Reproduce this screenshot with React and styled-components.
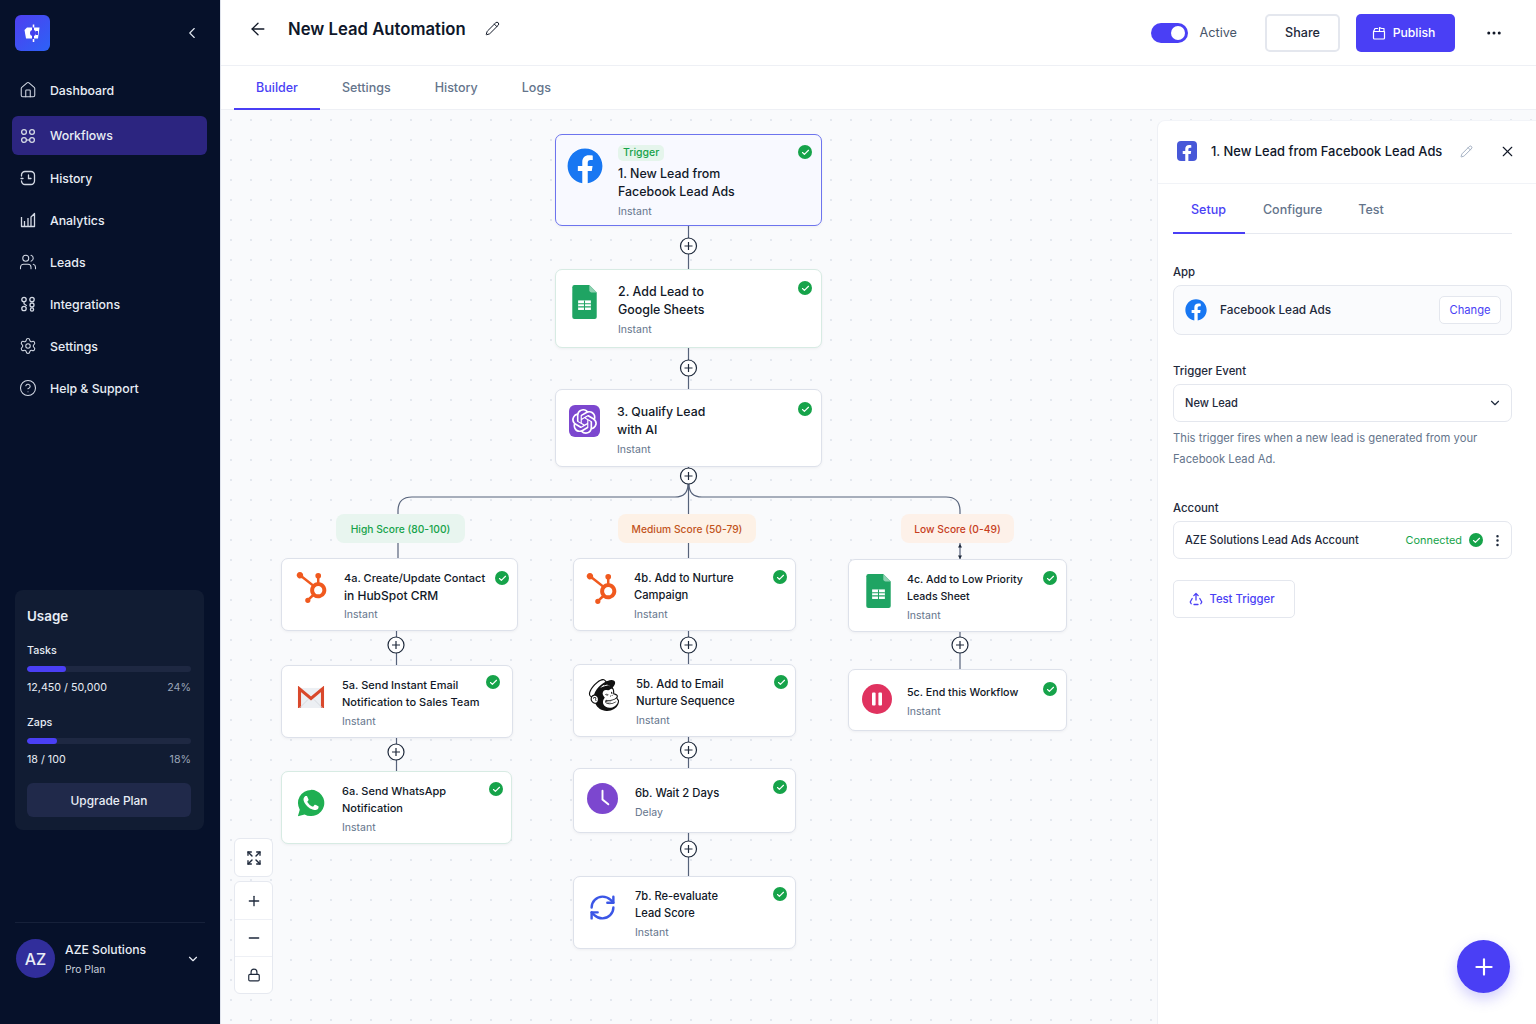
import styled, { createGlobalStyle } from "styled-components";
import {
  ArrowLeft,
  Check,
  ChevronDown,
  ChevronLeft,
  CircleHelp,
  Ellipsis,
  EllipsisVertical,
  Expand,
  House,
  Lock,
  Minus,
  Pencil,
  Plus,
  RefreshCw,
  Settings,
  Users,
  X,
} from "lucide-react";
import { FaFacebook, FaFacebookF } from "react-icons/fa";
import { SiHubspot, SiMailchimp, SiOpenai } from "react-icons/si";

const GlobalStyle = createGlobalStyle`
  * { box-sizing: border-box; }
  html, body { margin: 0; height: 100%; }
  body {
    font-family: Inter, "Liberation Sans", sans-serif;
    color: #111827;
    background: #fff;
    overflow: hidden;
  }
`;

const BLUE = "#4a3ff5";

const Shell = styled.div`
  display: flex;
  width: 1536px;
  height: 1024px;
  position: relative;
  overflow: hidden;
`;

/* sidebar */
const Sidebar = styled.aside`
  flex: 0 0 221px;
  display: flex;
  flex-direction: column;
  padding: 15px 0 0;
  background: #06112a;
  border-right: 1px solid #dfe3ec;
`;
const Brand = styled.div`
  display: flex;
  align-items: center;
  justify-content: space-between;
  height: 36px;
  padding: 0 19px 0 15px;
  color: #e2e8f0;
`;
const Logo = styled.div`
  width: 35px;
  height: 36px;
  border-radius: 6px;
  background: linear-gradient(135deg, #4f3ff0 0%, #2c62f6 100%);
  display: flex;
  align-items: center;
  justify-content: center;
`;
const Nav = styled.nav`
  display: flex;
  flex-direction: column;
  padding: 18px 13px 0 12px;
`;
const NavItem = styled.div`
  display: flex;
  align-items: center;
  gap: 14px;
  height: ${(p) => (p.$active ? 39 : 42)}px;
  margin: ${(p) => (p.$active ? "5px 0 2px" : "0")};
  padding-left: 8px;
  border-radius: 6px;
  font-size: 12.3px;
  font-weight: 500;
  color: #e8edf5;
  background: ${(p) => (p.$active ? "#2c2580" : "transparent")};
`;
const NavGlyph = styled.span`
  flex: 0 0 16px;
  width: 16px;
  min-width: 0;
  display: flex;
  align-items: center;
  justify-content: center;
  color: #d3d9e4;
  svg { flex: none; }
`;
const UsageCard = styled.section`
  margin: 181px 16px 0 15px;
  height: 240px;
  padding: 17px 13px 0 12px;
  background: #111c33;
  border-radius: 8px;
  color: #e8edf5;
`;
const UsageTitle = styled.div`
  font-size: 13.4px;
  font-weight: 600;
  line-height: 18px;
  margin-bottom: 19px;
`;
const Meter = styled.div`
  margin-bottom: 21px;
`;
const MeterLabel = styled.div`
  font-size: 10.7px;
  font-weight: 500;
  line-height: 14px;
`;
const MeterTrack = styled.div`
  height: 6px;
  margin: 8px 0 9px;
  border-radius: 3px;
  background: #1e2842;
  overflow: hidden;
`;
const MeterFill = styled.div`
  height: 100%;
  border-radius: 3px;
  background: ${BLUE};
`;
const MeterRow = styled.div`
  display: flex;
  justify-content: space-between;
  font-size: 10.7px;
  line-height: 14px;
  span:last-child { color: #9aa5b8; }
`;
const UpgradeButton = styled.div`
  height: 34px;
  margin-top: -5px;
  border-radius: 6px;
  background: #20294a;
  display: flex;
  align-items: center;
  justify-content: center;
  font-size: 11.9px;
  font-weight: 500;
`;
const Account = styled.div`
  margin: 92px 15px 0;
  padding: 16px 5px 0 1px;
  border-top: 1px solid #16213a;
  display: flex;
  align-items: center;
  color: #e8edf5;
`;
const Avatar = styled.div`
  width: 39px;
  height: 39px;
  border-radius: 50%;
  background: #312e9b;
  display: flex;
  align-items: center;
  justify-content: center;
  font-size: 16px;
  font-weight: 500;
  margin-right: 10px;
`;
const AccountText = styled.div`
  flex: 1;
  b { display: block; font-size: 12.2px; font-weight: 500; line-height: 17px; margin-bottom: 4px; }
  span { display: block; font-size: 10.3px; line-height: 14px; color: #cbd2de; }
`;

/* main column */
const Main = styled.main`
  flex: 1;
  display: flex;
  flex-direction: column;
  min-width: 0;
`;
const Header = styled.header`
  flex: 0 0 66px;
  display: flex;
  align-items: center;
  padding: 0 33px 8px 27px;
  border-bottom: 1px solid #eef0f5;
`;
const Title = styled.h1`
  margin: 0 19px 0 20px;
  font-size: 16.7px;
  font-weight: 600;
  color: #0f172a;
`;
const HeaderRight = styled.div`
  margin: 8px 0 0 auto;
  display: flex;
  align-items: center;
`;
const Toggle = styled.div`
  width: 37px;
  height: 20px;
  border-radius: 10px;
  background: ${BLUE};
  padding: 3px 3px 3px 20px;
  margin-right: 11px;
  &::after {
    content: "";
    display: block;
    width: 14px;
    height: 14px;
    border-radius: 50%;
    background: #fff;
  }
`;
const ToggleLabel = styled.span`
  font-size: 12.7px;
  color: #475569;
  margin-right: 28px;
`;
const ShareButton = styled.div`
  width: 75px;
  height: 38px;
  border: 2px solid #e4e7ee;
  border-radius: 5px;
  display: flex;
  align-items: center;
  justify-content: center;
  font-size: 12.6px;
  font-weight: 500;
  color: #1e293b;
  margin-right: 16px;
`;
const PublishButton = styled.div`
  width: 99px;
  height: 38px;
  padding-right: 4px;
  border-radius: 5px;
  background: ${BLUE};
  color: #fff;
  display: flex;
  align-items: center;
  justify-content: center;
  gap: 7px;
  font-size: 12.2px;
  font-weight: 500;
  margin-right: 30px;
`;
const TabBar = styled.div`
  flex: 0 0 44px;
  min-height: 0;
  display: flex;
  padding-left: 13px;
  border-bottom: 1px solid #eef0f5;
`;
const Tab = styled.div`
  padding: 0 22px;
  display: flex;
  align-items: center;
  height: 44px;
  font-size: 12.5px;
  font-weight: 500;
  color: ${(p) => (p.$active ? BLUE : "#64748b")};
  border-bottom: 2px solid ${(p) => (p.$active ? BLUE : "transparent")};
`;
const Workspace = styled.div`
  flex: 1;
  display: flex;
  background-color: #f9fafc;
  background-image: radial-gradient(#e4e8ef 0.8px, transparent 1px);
  background-size: 20px 20px;
  min-height: 0;
`;

/* canvas */
const Canvas = styled.div`
  position: relative;
  flex: 0 0 936px;
`;
const Wires = styled.svg`
  position: absolute;
  inset: 0;
  width: 936px;
  height: 914px;
`;
const NodeCard = styled.div.attrs((p) => ({
  style: { left: p.$x - 221, top: p.$y - 110, width: p.$w, height: p.$h },
}))`
  position: absolute;
  display: flex;
  align-items: center;
  background: ${(p) => (p.$selected ? "#f8f9ff" : "#fff")};
  border: 1px solid ${(p) => (p.$selected ? "#6d74ee" : p.$tint ? "#d7ebe3" : "#dde1ea")};
  border-radius: 7px;
  box-shadow: 0 1px 3px rgba(15, 23, 42, 0.05);
`;
const NodeIcon = styled.div`
  flex: 0 0 ${(p) => p.$slot}px;
  align-self: flex-start;
  padding: ${(p) => p.$top}px 0 0 ${(p) => p.$left}px;
  display: flex;
`;
const NodeBody = styled.div`
  display: flex;
  flex-direction: column;
  align-items: flex-start;
  padding-top: 2px;
`;
const Tag = styled.span`
  height: 16px;
  padding: 0 5px;
  margin-bottom: 4px;
  border-radius: 5px;
  background: #e5f5ec;
  color: #16a34a;
  font-size: 10.5px;
  font-weight: 500;
  line-height: 16px;
`;
const NodeLine = styled.div`
  font-size: ${(p) => p.$size}px;
  font-weight: 500;
  line-height: ${(p) => p.$lh}px;
  color: #111827;
  white-space: nowrap;
`;
const NodeSub = styled.div`
  margin-top: 4px;
  font-size: 10.5px;
  line-height: 13px;
  color: #64748b;
`;
const StatusDot = styled.span`
  display: inline-flex;
  align-items: center;
  justify-content: center;
  width: 14px;
  height: 14px;
  border-radius: 50%;
  background: #16a34a;
  color: #fff;
`;
const NodeStatus = styled.div`
  position: absolute;
  right: ${(p) => p.$right}px;
  top: ${(p) => p.$top}px;
  display: flex;
`;
const BranchLabel = styled.div.attrs((p) => ({
  style: { left: p.$x - 221, top: 514 - 110, width: p.$w },
}))`
  position: absolute;
  height: 29px;
  border-radius: 8px;
  display: flex;
  align-items: center;
  justify-content: center;
  font-size: 10.25px;
  font-weight: 500;
  background: ${(p) => p.$bg};
  color: ${(p) => p.$color};
`;
const ZoomStack = styled.div`
  position: absolute;
  left: 13px;
  top: 728px;
  display: flex;
  flex-direction: column;
  gap: 4px;
`;
const ZoomGroup = styled.div`
  width: 39px;
  background: #fff;
  border: 1px solid #e6e9f0;
  border-radius: 6px;
  display: flex;
  flex-direction: column;
`;
const ZoomButton = styled.div`
  height: 37px;
  display: flex;
  align-items: center;
  justify-content: center;
  color: #1e293b;
  & + & { border-top: 1px solid #eef0f5; }
`;

/* right panel */
const Panel = styled.aside`
  flex: 1;
  margin-top: 10px;
  background: #fff;
  border-left: 1px solid #eef0f5;
  border-top: 1px solid #f2f4f8;
  border-top-left-radius: 8px;
`;
const PanelHeader = styled.div`
  height: 63px;
  display: flex;
  align-items: center;
  padding: 0 20px 2px 19px;
  border-bottom: 1px solid #f1f3f7;
`;
const PanelTitle = styled.div`
  margin-left: 14px;
  font-size: 12.9px;
  font-weight: 500;
  color: #0f172a;
  white-space: nowrap;
  flex: 1;
`;
const CloseIcon = styled(X)`
  margin-left: 26px;
`;
const SquareLogo = styled.div`
  width: 20px;
  height: 20px;
  border-radius: 4px;
  background: #4758d8;
  color: #fff;
  display: flex;
  align-items: flex-end;
  justify-content: center;
`;
const PanelBody = styled.div`
  padding: 0 24px 0 15px;
`;
const PanelTabs = styled.div`
  display: flex;
  height: 50px;
  border-bottom: 1px solid #e6e9f0;
  margin-bottom: 30px;
`;
const PanelTab = styled.div`
  padding: 2px ${(p) => (p.$active ? "19px 0 18px" : "18px 0")};
  height: 50px;
  display: flex;
  align-items: center;
  font-size: 12.5px;
  font-weight: 500;
  color: ${(p) => (p.$active ? BLUE : "#64748b")};
  border-bottom: 2px solid ${(p) => (p.$active ? BLUE : "transparent")};
`;
const FieldLabel = styled.div`
  font-size: 11.4px;
  font-weight: 500;
  line-height: 15px;
  color: #1e293b;
  padding-top: 1px;
  margin-bottom: 5px;
`;
const AppBox = styled.div`
  height: 50px;
  display: flex;
  align-items: center;
  padding: 0 10px 0 11px;
  border: 1px solid #e4e7ee;
  border-radius: 8px;
  background: #fafbfd;
  margin-bottom: 28px;
`;
const AppName = styled.div`
  flex: 1;
  margin-left: 13px;
  font-size: 11.8px;
  font-weight: 500;
  color: #1e293b;
`;
const ChangeButton = styled.div`
  width: 62px;
  height: 28px;
  border: 1px solid #e4e7ee;
  border-radius: 5px;
  background: #fff;
  display: flex;
  align-items: center;
  justify-content: center;
  color: ${BLUE};
  font-size: 11.2px;
`;
const FieldBox = styled.div`
  height: 38px;
  display: flex;
  align-items: center;
  justify-content: space-between;
  padding: 0 9px 0 11px;
  border: 1px solid #e4e7ee;
  border-radius: 7px;
  font-size: 11.1px;
  font-weight: 500;
  color: #1e293b;
`;
const Hint = styled.p`
  margin: 6px 0 30px;
  font-size: 11.24px;
  line-height: 21px;
  color: #64748b;
`;
const Connected = styled.div`
  display: flex;
  align-items: center;
  font-size: 10.9px;
  color: #16a34a;
  font-weight: 400;
  gap: 7px;
`;
const Kebab = styled(EllipsisVertical)`
  margin-right: -3px;
  color: #1e293b;
`;
const TestButton = styled.div`
  width: 122px;
  height: 38px;
  margin-top: 21px;
  padding-right: 4px;
  border: 1px solid #e4e7ee;
  border-radius: 5px;
  display: flex;
  align-items: center;
  justify-content: center;
  gap: 6px;
  color: ${BLUE};
  font-size: 11.3px;
  font-weight: 500;
`;
const Fab = styled.div`
  position: absolute;
  left: 1457px;
  top: 940px;
  width: 53px;
  height: 53px;
  border-radius: 50%;
  background: ${BLUE};
  color: #fff;
  display: flex;
  align-items: center;
  justify-content: center;
  box-shadow: 0 6px 14px rgba(74, 63, 245, 0.25);
`;

/* drawn icons */
const LogoMark = () => (
  <svg width="22" height="22" viewBox="0 0 22 22" fill="none">
    <path d="M5 5.5h12.5l-1.5 11H4L2.5 8z" fill="#fff" />
    <path d="M11 2v18" stroke="#4340ee" strokeWidth="2" />
    <path d="M11.5 2.5v3M11.5 17v3" stroke="#fff" strokeWidth="1.6" />
    <circle cx="11" cy="11" r="3" fill="#4340ee" />
    <path d="M14 9h2v4h-2z" fill="#4340ee" />
  </svg>
);
const WorkflowIcon = () => (
  <svg width="16" height="16" viewBox="0 0 16 16" fill="none" stroke="currentColor" strokeWidth="1.3">
    <circle cx="4" cy="4" r="2.4" />
    <circle cx="12" cy="4" r="2.4" />
    <circle cx="4" cy="12" r="2.4" />
    <circle cx="12" cy="12" r="2.4" />
    <path d="M6.4 12h3.2" />
  </svg>
);
const HistoryIcon = () => (
  <svg width="16" height="16" viewBox="0 0 16 16" fill="none" stroke="currentColor" strokeWidth="1.3" strokeLinecap="round">
    <path d="M1.5 6V5a3.5 3.5 0 0 1 3.5-3.5h6A3.5 3.5 0 0 1 14.5 5v6a3.5 3.5 0 0 1-3.5 3.5H5A3.5 3.5 0 0 1 1.5 11" />
    <path d="M8.5 5v3.5H11M1 8.5h2" />
  </svg>
);
const AnalyticsIcon = () => (
  <svg width="16" height="16" viewBox="0 0 16 16" fill="none" stroke="currentColor" strokeWidth="1.3" strokeLinejoin="round">
    <path d="M1.5 5v9.5h13V1.5L11 5v6M11 5v9.5M4.5 14.5V9M8 14.5V6" />
  </svg>
);
const IntegrationsIcon = () => (
  <svg width="16" height="16" viewBox="0 0 16 16" fill="none" stroke="currentColor" strokeWidth="1.3">
    <circle cx="4" cy="3.5" r="2.2" />
    <circle cx="12" cy="3.5" r="2.2" />
    <circle cx="12" cy="9" r="2" />
    <circle cx="4" cy="12.5" r="2.2" />
    <circle cx="12" cy="13.5" r="1.6" />
    <path d="M4 6v1.5c0 1 2.5 1 2.5 2.5" />
  </svg>
);
const PublishIcon = () => (
  <svg width="14" height="14" viewBox="0 0 14 14" fill="none" stroke="currentColor" strokeWidth="1.2" strokeLinejoin="round">
    <path d="M1.5 5.5V12a1 1 0 0 0 1 1h9a1 1 0 0 0 1-1V5.5zM1.5 5.5 3 2.5h3M7.5 5.5V1.5l2 1h2.5v3" />
  </svg>
);
const TestIcon = () => (
  <svg width="14" height="14" viewBox="0 0 14 14" fill="none" stroke="currentColor" strokeWidth="1.3" strokeLinecap="round" strokeLinejoin="round">
    <path d="M7 8V1.5M4.8 3.6 7 1.5l2.2 2.1M3.2 6.5 1.2 10l1 1.8M5 12.5h4M10.8 6.5l2 3.5-1 1.8" />
  </svg>
);
const SheetsIcon = () => (
  <svg width="25" height="34" viewBox="0 0 23 32">
    <path d="M2 0h14l7 7v23a2 2 0 0 1-2 2H2a2 2 0 0 1-2-2V2a2 2 0 0 1 2-2z" fill="#1fa463" />
    <path d="M16 0l7 7h-5a2 2 0 0 1-2-2z" fill="#8ed1b1" />
    <path d="M5.5 14.5h12v9h-12z" fill="#fff" />
    <path d="M5.5 17.6h12M5.5 20.6h12M11.5 14.5v9" stroke="#1fa463" strokeWidth="1" />
  </svg>
);
const GmailIcon = () => (
  <svg width="30" height="23" viewBox="0 0 30 24">
    <path d="M2 2h26v21H2z" fill="#eceff3" />
    <path d="M3 23V3l12 10L27 3v20" fill="none" stroke="#d9482b" strokeWidth="3.2" strokeLinejoin="miter" />
    <path d="M3 23l9-9M27 23l-9-9" stroke="#d5d9df" strokeWidth="1" />
  </svg>
);
const WhatsAppIcon = () => (
  <svg width="30" height="30" viewBox="0 0 24 24">
    <path d="M12 1.5A10.5 10.5 0 0 0 3 17.3L1.5 22.5l5.4-1.4A10.5 10.5 0 1 0 12 1.5z" fill="#1faf52" />
    <path
      d="M17.47 14.38c-.3-.15-1.76-.87-2.03-.97-.27-.1-.47-.15-.67.15-.2.3-.77.97-.94 1.16-.17.2-.35.22-.65.07-.3-.15-1.26-.46-2.39-1.47-.88-.79-1.48-1.76-1.65-2.06-.17-.3-.02-.46.13-.6.13-.14.3-.35.45-.52.15-.17.2-.3.3-.5.1-.2.05-.37-.03-.52-.07-.15-.67-1.61-.92-2.21-.24-.58-.49-.5-.67-.51l-.57-.01c-.2 0-.52.07-.79.37-.27.3-1.04 1.02-1.04 2.48s1.07 2.88 1.21 3.07c.15.2 2.1 3.2 5.08 4.49.71.3 1.26.49 1.69.62.71.23 1.36.2 1.87.12.57-.08 1.76-.72 2.01-1.41.25-.69.25-1.29.17-1.41-.07-.13-.27-.2-.57-.35z"
      fill="#fff"
    />
  </svg>
);
const ClockBadge = () => (
  <svg width="31" height="31" viewBox="0 0 32 32">
    <circle cx="16" cy="16" r="16" fill="#7c47cf" />
    <path d="M16 8v9l6 5" fill="none" stroke="#fff" strokeWidth="2" strokeLinecap="round" />
  </svg>
);
const PauseBadge = () => (
  <svg width="30" height="30" viewBox="0 0 30 30">
    <circle cx="15" cy="15" r="15" fill="#e0325f" />
    <rect x="10" y="8.5" width="3.6" height="13" rx="1" fill="#fff" />
    <rect x="16.4" y="8.5" width="3.6" height="13" rx="1" fill="#fff" />
  </svg>
);
const SquareBadge = styled.div`
  width: 31px;
  height: 32px;
  border-radius: 6px;
  background: #7c47cf;
  color: #fff;
  display: flex;
  align-items: center;
  justify-content: center;
`;
const OpenAiBadge = () => (
  <SquareBadge>
    <SiOpenai size={25} />
  </SquareBadge>
);
const FacebookRound = styled.span`
  display: inline-flex;
  color: #1877f2;
  border-radius: 50%;
  background: #fff;
`;
const FacebookMark = ({ size }) => (
  <FacebookRound>
    <FaFacebook size={size} />
  </FacebookRound>
);

const Good = () => (
  <StatusDot>
    <Check size={9} strokeWidth={3} />
  </StatusDot>
);

const navItems = [
  ["Dashboard", <House size={18} strokeWidth={1.4} />],
  ["Workflows", <WorkflowIcon />, true],
  ["History", <HistoryIcon />],
  ["Analytics", <AnalyticsIcon />],
  ["Leads", <Users size={18} strokeWidth={1.4} />],
  ["Integrations", <IntegrationsIcon />],
  ["Settings", <Settings size={18} strokeWidth={1.4} />],
  ["Help & Support", <CircleHelp size={18} strokeWidth={1.4} />],
];

const Hub = () => <SiHubspot size={31} color="#f0591e" />;

const nodes = [
  { x: 555, y: 134, w: 267, h: 92, left: 11, iconTop: 13, slot: 62, icon: <FacebookMark size={36} />, tag: "Trigger", title: ["1. New Lead from", "Facebook Lead Ads"], sub: "Instant", size: 12.4, lh: 18, right: 9, top: 10, selected: true },
  { x: 555, y: 269, w: 267, h: 79, left: 16, iconTop: 15, slot: 62, icon: <SheetsIcon />, title: ["2. Add Lead to", "Google Sheets"], sub: "Instant", size: 12.4, lh: 18, right: 9, top: 11, tint: true },
  { x: 555, y: 389, w: 267, h: 78, left: 13, iconTop: 15, slot: 61, icon: <OpenAiBadge />, title: ["3. Qualify Lead", "with AI"], sub: "Instant", size: 12.3, lh: 18, right: 9, top: 12 },
  { x: 281, y: 558, w: 237, h: 73, left: 14, iconTop: 13, slot: 62, icon: <Hub />, title: ["4a. Create/Update Contact", "in HubSpot CRM"], sub: "Instant", size: 11, lineSizes: [11, 12], lh: 17, right: 8, top: 12 },
  { x: 281, y: 665, w: 232, h: 73, left: 14, iconTop: 20, slot: 60, icon: <GmailIcon />, title: ["5a. Send Instant Email", "Notification to Sales Team"], sub: "Instant", size: 11, lh: 17, right: 12, top: 9 },
  { x: 281, y: 771, w: 231, h: 73, left: 14, iconTop: 16, slot: 60, icon: <WhatsAppIcon />, title: ["6a. Send WhatsApp", "Notification"], sub: "Instant", size: 11, lh: 17, right: 8, top: 10, tint: true },
  { x: 573, y: 558, w: 223, h: 73, left: 12, iconTop: 14, slot: 60, icon: <Hub />, title: ["4b. Add to Nurture", "Campaign"], sub: "Instant", size: 11.2, lh: 17, right: 8, top: 11 },
  { x: 573, y: 664, w: 223, h: 73, left: 14, iconTop: 14, slot: 62, icon: <SiMailchimp size={32} color="#111" />, title: ["5b. Add to Email", "Nurture Sequence"], sub: "Instant", size: 11.3, lh: 17, right: 7, top: 10 },
  { x: 573, y: 768, w: 223, h: 65, left: 13, iconTop: 14, slot: 61, icon: <ClockBadge />, title: ["6b. Wait 2 Days"], sub: "Delay", size: 11.3, lh: 17, right: 8, top: 11 },
  { x: 573, y: 876, w: 223, h: 73, left: 14, iconTop: 16, slot: 61, icon: <RefreshCw size={29} color="#3b56e6" strokeWidth={2} />, title: ["7b. Re-evaluate", "Lead Score"], sub: "Instant", size: 11.1, lh: 17, right: 8, top: 10 },
  { x: 848, y: 559, w: 219, h: 73, left: 17, iconTop: 14, slot: 58, icon: <SheetsIcon />, title: ["4c. Add to Low Priority", "Leads Sheet"], sub: "Instant", size: 10.6, lh: 17, right: 9, top: 11 },
  { x: 848, y: 669, w: 219, h: 62, left: 13, iconTop: 14, slot: 58, icon: <PauseBadge />, title: ["5c. End this Workflow"], sub: "Instant", size: 10.7, lh: 17, right: 9, top: 12 },
];

const plusSpots = [
  [688.5, 246], [688.5, 368], [688.5, 476],
  [396, 645], [396, 752],
  [688.5, 645], [688.5, 750], [688.5, 849],
  [960, 645],
];

const wirePaths = [
  "M688.5 225V269", "M688.5 348V389", "M688.5 467V514",
  "M688 484Q688 497 675 497H412Q398 497 398 511V514",
  "M689 484Q689 497 702 497H946Q960 497 960 511V514",
  "M398 543V558", "M688.5 543V558", "M960 543V559",
  "M396.5 631V665", "M396.5 738V771",
  "M688.5 631V664", "M688.5 737V768", "M688.5 833V876",
  "M960 632V669",
];

const Flow = () => (
  <Wires viewBox="221 110 936 914" fill="none">
    {wirePaths.map((d) => (
      <path key={d} d={d} stroke="#56627a" strokeWidth="1.2" />
    ))}
    <path d="M958 555.5l2 3.5 2-3.5zM958 547.5l2-3.5 2 3.5z" fill="#1e293b" />
    {plusSpots.map(([cx, cy]) => (
      <g key={`${cx}-${cy}`} stroke="#1e293b" strokeWidth="1.2">
        <circle cx={cx} cy={cy} r="8" fill="#fff" />
        <path d={`M${cx - 4} ${cy}h8M${cx} ${cy - 4}v8`} />
      </g>
    ))}
  </Wires>
);

const App = () => (
  <Shell>
    <GlobalStyle />
    <Sidebar>
      <Brand>
        <Logo>
          <LogoMark />
        </Logo>
        <ChevronLeft size={18} strokeWidth={1.5} />
      </Brand>
      <Nav>
        {navItems.map(([label, icon, active]) => (
          <NavItem key={label} $active={active}>
            <NavGlyph>{icon}</NavGlyph>
            {label}
          </NavItem>
        ))}
      </Nav>
      <UsageCard>
        <UsageTitle>Usage</UsageTitle>
        <Meter>
          <MeterLabel>Tasks</MeterLabel>
          <MeterTrack>
            <MeterFill style={{ width: "24%" }} />
          </MeterTrack>
          <MeterRow>
            <span>12,450 / 50,000</span>
            <span>24%</span>
          </MeterRow>
        </Meter>
        <Meter>
          <MeterLabel>Zaps</MeterLabel>
          <MeterTrack>
            <MeterFill style={{ width: "18%" }} />
          </MeterTrack>
          <MeterRow>
            <span>18 / 100</span>
            <span>18%</span>
          </MeterRow>
        </Meter>
        <UpgradeButton>Upgrade Plan</UpgradeButton>
      </UsageCard>
      <Account>
        <Avatar>AZ</Avatar>
        <AccountText>
          <b>AZE Solutions</b>
          <span>Pro Plan</span>
        </AccountText>
        <ChevronDown size={14} />
      </Account>
    </Sidebar>

    <Main>
      <Header>
        <ArrowLeft size={20} strokeWidth={1.6} />
        <Title>New Lead Automation</Title>
        <Pencil size={15} strokeWidth={1.6} />
        <HeaderRight>
          <Toggle />
          <ToggleLabel>Active</ToggleLabel>
          <ShareButton>Share</ShareButton>
          <PublishButton>
            <PublishIcon />
            Publish
          </PublishButton>
          <Ellipsis size={18} />
        </HeaderRight>
      </Header>
      <TabBar>
        <Tab $active>Builder</Tab>
        <Tab>Settings</Tab>
        <Tab>History</Tab>
        <Tab>Logs</Tab>
      </TabBar>
      <Workspace>
        <Canvas>
          <Flow />
          <BranchLabel $x={336} $w={129} $bg="#e8f5ef" $color="#16a34a">
            High Score (80-100)
          </BranchLabel>
          <BranchLabel $x={618} $w={138} $bg="#fdf1e6" $color="#c2541c">
            Medium Score (50-79)
          </BranchLabel>
          <BranchLabel $x={901} $w={113} $bg="#fdf1e9" $color="#c73e1d">
            Low Score (0-49)
          </BranchLabel>
          {nodes.map((n) => (
            <NodeCard key={n.title[0]} $x={n.x} $y={n.y} $w={n.w} $h={n.h} $selected={n.selected} $tint={n.tint}>
              <NodeIcon $slot={n.slot} $left={n.left} $top={n.iconTop}>
                {n.icon}
              </NodeIcon>
              <NodeBody>
                {n.tag && <Tag>{n.tag}</Tag>}
                {n.title.map((line, i) => (
                  <NodeLine key={line} $size={n.lineSizes ? n.lineSizes[i] : n.size} $lh={n.lh}>
                    {line}
                  </NodeLine>
                ))}
                <NodeSub>{n.sub}</NodeSub>
              </NodeBody>
              <NodeStatus $right={n.right} $top={n.top}>
                <Good />
              </NodeStatus>
            </NodeCard>
          ))}
          <ZoomStack>
            <ZoomGroup>
              <ZoomButton>
                <Expand size={16} />
              </ZoomButton>
            </ZoomGroup>
            <ZoomGroup>
              <ZoomButton>
                <Plus size={16} />
              </ZoomButton>
              <ZoomButton>
                <Minus size={16} />
              </ZoomButton>
              <ZoomButton>
                <Lock size={14} />
              </ZoomButton>
            </ZoomGroup>
          </ZoomStack>
        </Canvas>
        <Panel>
          <PanelHeader>
            <SquareLogo>
              <FaFacebookF size={16} />
            </SquareLogo>
            <PanelTitle>1. New Lead from Facebook Lead Ads</PanelTitle>
            <Pencil size={13} color="#94a3b8" strokeWidth={1.6} />
            <CloseIcon size={17} strokeWidth={1.6} />
          </PanelHeader>
          <PanelBody>
            <PanelTabs>
              <PanelTab $active>Setup</PanelTab>
              <PanelTab>Configure</PanelTab>
              <PanelTab>Test</PanelTab>
            </PanelTabs>
            <FieldLabel>App</FieldLabel>
            <AppBox>
              <FacebookMark size={22} />
              <AppName>Facebook Lead Ads</AppName>
              <ChangeButton>Change</ChangeButton>
            </AppBox>
            <FieldLabel>Trigger Event</FieldLabel>
            <FieldBox>
              New Lead
              <ChevronDown size={14} />
            </FieldBox>
            <Hint>
              This trigger fires when a new lead is generated from your
              <br />
              Facebook Lead Ad.
            </Hint>
            <FieldLabel>Account</FieldLabel>
            <FieldBox>
              AZE Solutions Lead Ads Account
              <Connected>
                Connected
                <Good />
                <Kebab size={15} />
              </Connected>
            </FieldBox>
            <TestButton>
              <TestIcon />
              Test Trigger
            </TestButton>
          </PanelBody>
        </Panel>
      </Workspace>
    </Main>
    <Fab>
      <Plus size={26} strokeWidth={2} />
    </Fab>
  </Shell>
);

export default App;
